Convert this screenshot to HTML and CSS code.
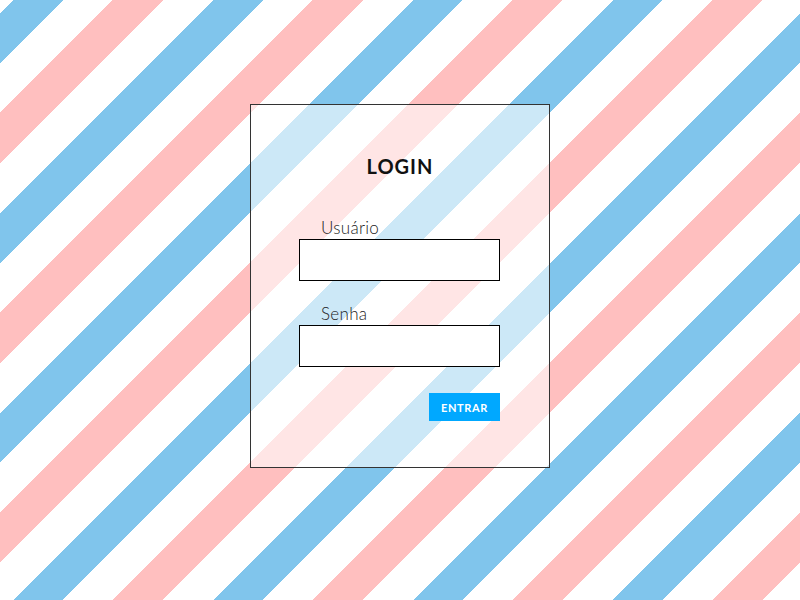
FILE: index.html
```html
<!DOCTYPE html>
<html lang="pt-BR">
<head>
<meta charset="utf-8">
<title>Login</title>
<link rel="stylesheet" href="styles.css">
</head>
<body>
  <main class="panel">
    <h1 class="title">LOGIN</h1>
    <form class="form">
      <label class="label" for="user">Usuário</label>
      <input class="field" id="user" type="text">
      <label class="label label-second" for="pass">Senha</label>
      <input class="field" id="pass" type="password">
      <div class="actions">
        <button class="button" type="button">ENTRAR</button>
      </div>
    </form>
  </main>
</body>
</html>
```

FILE: styles.css
```css
html, body {
  height: 100%;
}

body {
  margin: 0;
  padding-top: 104px;
  box-sizing: border-box;
  font-family: Lato, "Open Sans", sans-serif;
  background: repeating-linear-gradient(135deg,
    #ffffff 0 9.2px,
    #80c5ec 9.2px 44.55px,
    #ffffff 44.55px 79.9px,
    #ffbfbf 79.9px 115.26px,
    #ffffff 115.26px 141.42px);
}

.panel {
  box-sizing: border-box;
  width: 300px;
  height: 364px;
  margin: 0 auto;
  border: 1px solid #333;
  background: rgba(255, 255, 255, 0.6);
  padding-top: 49px;
}

.title {
  margin: 0;
  font-size: 20px;
  line-height: 24px;
  font-weight: 700;
  letter-spacing: 1px;
  text-align: center;
  color: #111;
}

.form {
  width: 201px;
  margin: 40px 0 0 48px;
  display: flex;
  flex-direction: column;
}

.label {
  display: block;
  padding-left: 22px;
  font-size: 17px;
  line-height: 20px;
  font-weight: 300;
  color: #222;
  letter-spacing: 0.3px;
}

.label-second {
  margin-top: 23px;
}

.field {
  box-sizing: border-box;
  width: 201px;
  height: 42px;
  margin: 1px 0 0;
  border: 1px solid #000;
  background: #fff;
  padding: 0 8px;
  font: inherit;
}

.actions {
  display: flex;
  justify-content: flex-end;
  margin-top: 26px;
}

.button {
  width: 71px;
  height: 28px;
  border: none;
  padding: 0;
  background: #00a8ff;
  color: #fff;
  font-family: Lato, sans-serif;
  font-size: 11px;
  font-weight: 700;
  letter-spacing: 0.6px;
}
```
